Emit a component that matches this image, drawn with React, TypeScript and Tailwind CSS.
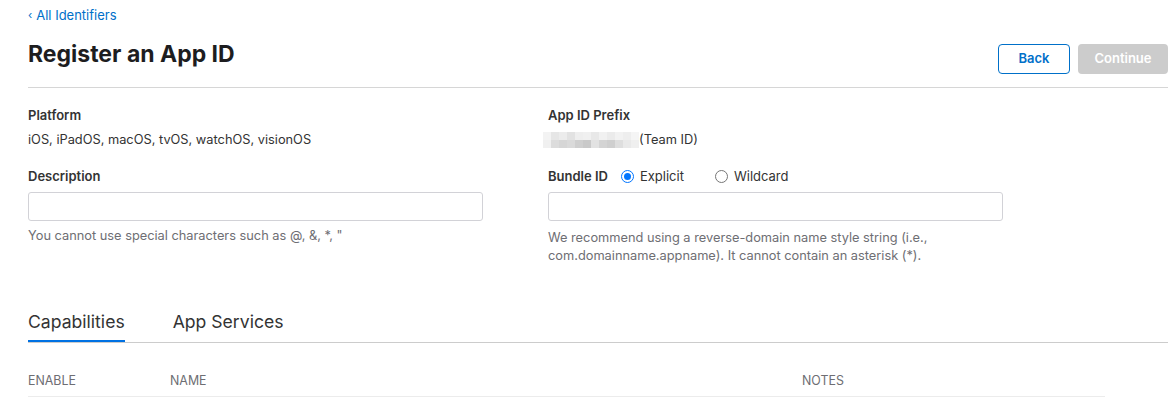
import type { FC } from "react";

const mosaic = [
    ["#f3f3f3", "#e6e6e6", "#ececec", "#e2e2e2", "#eeeeee", "#f0f0f0", "#e8e8e8", "#f1f1f1", "#ebebeb", "#f2f2f2", "#eeeeee", "#f5f5f5"],
    ["#f0f0f0", "#dcdcdc", "#d6d6d6", "#dadada", "#cfcfcf", "#c9c9c9", "#e2e2e2", "#d4d4d4", "#cfcfcf", "#dedede", "#e9e9e9", "#efefef"],
];

const Label: FC<{ children: string }> = ({ children }) => (
    <p className="text-[13px] leading-[18px] font-semibold text-[#333333]">{children}</p>
);

const Radio: FC<{ checked?: boolean; label: string }> = ({ checked, label }) => (
    <label className="flex items-center gap-[6px] text-[13px] leading-[18px] text-[#333333]">
        {checked ? (
            <span className="w-[13px] h-[13px] rounded-full border-[1px] border-[#0075ff] flex items-center justify-center">
                <span className="w-[7px] h-[7px] rounded-full bg-[#0075ff]" />
            </span>
        ) : (
            <span className="w-[13px] h-[13px] rounded-full border-[1px] border-[#767676]" />
        )}
        {label}
    </label>
);

export default function App() {
    return (
        <div className="w-[1176px] h-[399px] overflow-hidden bg-white pl-[28px] pr-[8px] font-['Inter',sans-serif] antialiased">
            <div className="pt-[6px]">
                <a className="text-[13px] leading-[18px] text-[#0070c9] flex items-center gap-[4px]">
                    <span className="text-[11px]">‹</span>All Identifiers
                </a>
            </div>

            <div className="flex justify-between items-start pt-[20px] pb-[13px] border-b border-[#d6d6d6]">
                <h1 className="text-[23px] leading-[30px] font-bold text-[#1d1d1f] mt-[-5px]">Register an App ID</h1>
                <div className="flex gap-[8px]">
                    <button className="w-[72px] h-[30px] rounded-[4px] border border-[#0070c9] text-[13px] font-semibold text-[#0070c9]">Back</button>
                    <button className="w-[90px] h-[30px] rounded-[4px] bg-[#cccccc] text-[13px] font-semibold text-white">Continue</button>
                </div>
            </div>

            <div className="grid grid-cols-[520px_1fr] pt-[18px]">
                <div className="flex flex-col">
                    <Label>Platform</Label>
                    <p className="mt-[7px] text-[12.8px] leading-[18px] text-[#333333]">iOS, iPadOS, macOS, tvOS, watchOS, visionOS</p>
                    <div className="mt-[18px]">
                        <Label>Description</Label>
                    </div>
                    <div className="mt-[7px] w-[455px] h-[29px] rounded-[3px] border border-[#d2d2d7]" />
                    <p className="mt-[6px] text-[12.8px] leading-[18px] text-[#6e6e73]">You cannot use special characters such as @, &amp;, *, "</p>
                </div>
                <div className="flex flex-col">
                    <Label>App ID Prefix</Label>
                    <div className="mt-[7px] flex items-center">
                        <div className="ml-[-5px] flex flex-col">
                            {mosaic.map((row, i) => (
                                <div key={i} className="flex">
                                    {row.map((c, j) => (
                                        <span key={j} className="w-[8px] h-[8px]" style={{ background: c }} />
                                    ))}
                                </div>
                            ))}
                        </div>
                        <span className="text-[12.8px] leading-[18px] text-[#333333]">(Team ID)</span>
                    </div>
                    <div className="mt-[18px] flex items-center gap-[14px]">
                        <Label>Bundle ID</Label>
                        <div className="flex items-center gap-[31px] ml-[-1px]">
                            <Radio checked label="Explicit" />
                            <Radio label="Wildcard" />
                        </div>
                    </div>
                    <div className="mt-[7px] w-[455px] h-[29px] rounded-[3px] border border-[#d2d2d7]" />
                    <p className="mt-[8px] text-[12.8px] leading-[18px] text-[#6e6e73] w-[420px]">We recommend using a reverse-domain name style string (i.e., com.domainname.appname). It cannot contain an asterisk (*).</p>
                </div>
            </div>

            <div className="mt-[45px] flex gap-[48px] border-b border-[#cccccc]">
                <div className="flex flex-col">
                    <span className="text-[17.6px] leading-[24px] text-[#333333]">Capabilities</span>
                    <span className="mt-[6px] h-[2px] bg-[#0071e3]" />
                </div>
                <span className="text-[17.6px] leading-[24px] text-[#333333]">App Services</span>
            </div>

            <div className="mt-[30px] w-[1077px] grid grid-cols-[142px_632px_1fr] pb-[7px] border-b border-[#ececec] text-[12.4px] leading-[16px] text-[#6e6e73] uppercase">
                <span>Enable</span>
                <span>Name</span>
                <span>Notes</span>
            </div>
        </div>
    );
}
